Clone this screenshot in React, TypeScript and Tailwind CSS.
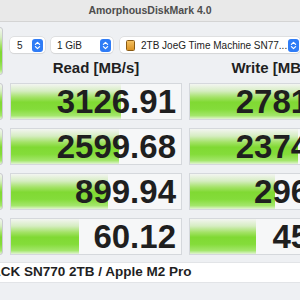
import React from "react";

const GREEN =
  "bg-[linear-gradient(to_bottom,#f3f5f1_0%,#d6edc2_20%,#a3e266_38%,#80d933_52%,#84dc3a_72%,#a3e66b_90%,#e2f4d3_100%)]";

const rows = [
  { r: "3126.91", rw: 110, w: "2781.66", ww: 113 },
  { r: "2599.68", rw: 108, w: "2374.17", ww: 108 },
  { r: "899.94", rw: 97, w: "296.33", ww: 85 },
  { r: "60.12", rw: 68, w: "45.28", ww: 66 },
];

function Stepper() {
  return (
    <svg width="11" height="13" viewBox="0 0 11 13" className="shrink-0">
      <rect x="0" y="0" width="11" height="13" rx="3" fill="#2f7cf6" />
      <path d="M3.4 5.4 L5.5 3.3 L7.6 5.4" stroke="#fff" strokeWidth="1.2" fill="none" strokeLinecap="round" strokeLinejoin="round" />
      <path d="M3.4 7.6 L5.5 9.7 L7.6 7.6" stroke="#fff" strokeWidth="1.2" fill="none" strokeLinecap="round" strokeLinejoin="round" />
    </svg>
  );
}

function Cell({ text, bar }: { text: string; bar: number }) {
  return (
    <div className="relative w-[172px] h-[37px] shrink-0 border border-[#d5d8dc] bg-[#f6f7f8] flex items-center justify-end pr-[5px]">
      <div className={`absolute left-0 top-0 bottom-0 ${GREEN}`} style={{ width: bar }} />
      <span className="relative text-[33px] font-bold leading-none text-[#1f1f1f]">{text}</span>
    </div>
  );
}

export default function App() {
  return (
    <div className="w-[300px] h-[300px] overflow-hidden bg-[#eef0f3] font-['Liberation_Sans',Arial,sans-serif] text-[#222]">
      <div className="h-[22px] bg-[#e9e9e9] border-b border-[#d4d4d4] flex items-center justify-center text-[10.5px] font-bold text-[#4d4d4d]">
        AmorphousDiskMark 4.0
      </div>
      <div className="ml-[-60px] w-[420px]">
        <div className="flex gap-[7px]">
          <div className={`w-[63px] h-[48px] mt-[5px] shrink-0 border border-[#c9cbcf] rounded-[3px] ${GREEN}`} />
          <div className="flex flex-col">
            <div className="flex pt-[15px] text-[10px] text-[#222]">
              <div className="w-[35px] h-[16px] bg-white rounded-[4px] shadow-[0_0_0_0.5px_#cfcfcf,0_1px_1px_rgba(0,0,0,0.08)] flex items-center justify-between pl-[7px] pr-[2px]">
                <span>5</span>
                <Stepper />
              </div>
              <div className="ml-[6px] w-[62px] h-[16px] bg-white rounded-[4px] shadow-[0_0_0_0.5px_#cfcfcf,0_1px_1px_rgba(0,0,0,0.08)] flex items-center justify-between pl-[6px] pr-[2px]">
                <span>1 GiB</span>
                <Stepper />
              </div>
              <div className="ml-[7px] w-[180px] h-[16px] bg-white rounded-[4px] shadow-[0_0_0_0.5px_#cfcfcf,0_1px_1px_rgba(0,0,0,0.08)] flex items-center pl-[6px] pr-[1px]">
                <div className="w-[9px] h-[11px] rounded-[1.5px] border border-[#8a5a12] bg-[linear-gradient(to_bottom,#f4c060,#dc9424)] shrink-0" />
                <span className="ml-[6px] whitespace-nowrap">2TB JoeG Time Machine SN77...</span>
                <div className="ml-auto">
                  <Stepper />
                </div>
              </div>
            </div>
            <div className="flex gap-[7px] h-[30px] items-center text-[15px] font-bold text-[#1f1f1f]">
              <div className="w-[172px] text-center whitespace-nowrap">Read [MB/s]</div>
              <div className="w-[172px] text-center whitespace-nowrap">Write [MB/s]</div>
            </div>
          </div>
        </div>
        <div className="flex flex-col gap-[8px]">
          {rows.map((row) => (
            <div key={row.r} className="flex gap-[7px]">
              <div className={`w-[63px] h-[37px] shrink-0 border border-[#c9cbcf] rounded-[3px] ${GREEN}`} />
              <Cell text={row.r} bar={row.rw} />
              <Cell text={row.w} bar={row.ww} />
            </div>
          ))}
        </div>
        <div className="mt-[7px] h-[21px] bg-white border-y border-[#e2e4e7] flex items-center pl-[3px] text-[13.5px] font-bold text-[#1f1f1f] whitespace-nowrap">
          WD_BLACK SN770 2TB / Apple M2 Pro
        </div>
      </div>
    </div>
  );
}
